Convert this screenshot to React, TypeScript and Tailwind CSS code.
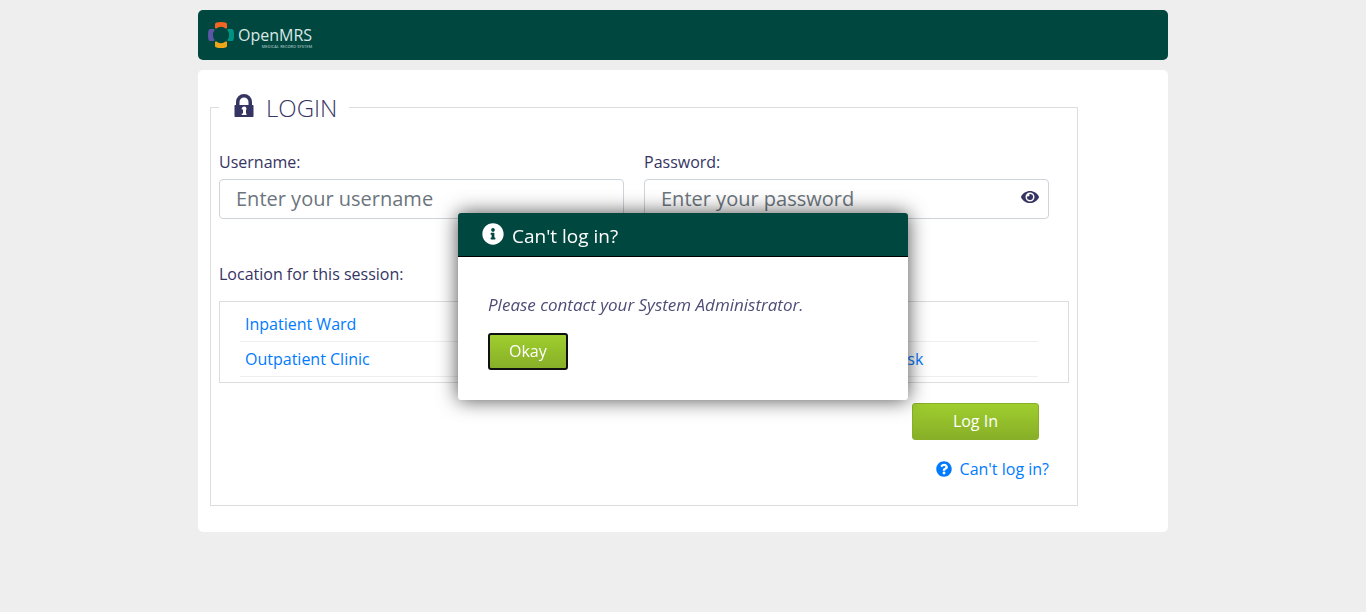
import React from "react";
import { FaEye, FaInfoCircle, FaQuestionCircle } from "react-icons/fa";

const locations = [
  "Inpatient Ward",
  "Isolation Ward",
  "Laboratory",
  "Outpatient Clinic",
  "Pharmacy",
  "Registration Desk",
];

function Logo() {
  return (
    <div className="flex items-center gap-1">
      <svg viewBox="0 0 26 26" className="size-[26px]" aria-hidden="true">
        <path d="M7 6V2Q7 0 13 0t6 2V6l-1 .7Q13 3 8 6.700Z" fill="#f26522" />
        <path d="M7 20v4Q7 26 13 26t6-2V20l-1-.7Q13 23 8 19.300Z" fill="#eea616" />
        <path d="M6 7H2Q0 7 0 13t2 6H6l.7-1Q3 13 6.700 8Z" fill="#5b57a6" />
        <path d="M20 7h4Q26 7 26 13t-2 6H20l-.7-1Q23 13 19.300 8Z" fill="#009384" />
      </svg>
      <div className="flex flex-col items-end pt-1 text-[#dce8e6]">
        <span className="text-base leading-5">OpenMRS</span>
        <span className="text-[4px] leading-1 font-semibold text-[#9dbdb8]">MEDICAL RECORD SYSTEM</span>
      </div>
    </div>
  );
}

function LockIcon() {
  return (
    <svg viewBox="0 0 20 24" className="h-6 w-5" fill="#363463" aria-hidden="true">
      <path
        fillRule="evenodd"
        d="M2 11V8a8 8 0 0 1 16 0v3h.8q.7 0 .7.800v10.400q0 .8-.7.800H1.200Q.5 23 .5 22.200V11.800Q.5 11 1.200 11ZM5.500 11h9V8a4.500 4.500 0 0 0-9 0ZM7.700 14.500v1H9V19.500H7.700V21h4.800v-1.500H12v-3l.5-2a2.300 2.300 0 0 0-2.400-2Q8.200 12.500 7.700 14.500Z"
      />
    </svg>
  );
}

function CantLogInDialog() {
  return (
    <div className="fixed inset-0 flex items-center justify-center p-4">
      <div
        role="dialog"
        aria-modal="true"
        aria-labelledby="dialog-title"
        className="w-full max-w-[450px] overflow-hidden rounded-[3px] bg-white shadow-[0_0_20px_#000000b3]"
      >
        <div className="flex h-11 items-center gap-2 border-b border-black bg-[#00473f] px-6 text-white">
          <FaInfoCircle className="size-[22px]" />
          <h3 id="dialog-title" className="pt-1 text-[19px]">Can't log in?</h3>
        </div>
        <div className="px-[30px] pt-9 pb-[30px]">
          <p className="mb-4 text-[17px] leading-6 text-[#4f4d78] italic">Please contact your System Administrator.</p>
          <button
            type="button"
            className="h-[37px] rounded-[3px] border-2 border-[#101010] bg-linear-to-b from-[#9fce2e] to-[#88af28] px-[19px] text-base text-white"
          >
            Okay
          </button>
        </div>
      </div>
    </div>
  );
}

export default function App() {
  const field = "h-10 w-full rounded border border-[#ced4da] bg-white px-4 pb-0.5 text-xl text-[#495057] placeholder:text-[#6c757d]";
  return (
    <div className="min-h-screen bg-[#eeeeee] px-4 py-2.5 font-['Open_Sans','Noto_Sans',sans-serif] font-normal text-[#363463]">
      <div className="mx-auto flex max-w-[970px] flex-col gap-2.5">
        <header className="flex h-[50px] items-center rounded-[5px] bg-[#00473f] px-2.5">
          <Logo />
        </header>

        <main className="rounded-[5px] bg-white pt-5 pr-[90px] pb-[26px] pl-3">
          <form>
            <fieldset className="border border-[#dddddd] px-2 pb-6">
              <legend className="flex h-[35px] items-center gap-3 pr-3 pl-[15px] text-2xl font-light">
                <span className="pb-1"><LockIcon /></span>
                LOGIN
              </legend>

              <div className="grid grid-cols-2 gap-5 pt-[25px] pr-5">
                <div>
                  <label htmlFor="username" className="mb-[5px] block text-base">Username:</label>
                  <input id="username" type="text" placeholder="Enter your username" className={field} />
                </div>
                <div>
                  <label htmlFor="password" className="mb-[5px] block text-base">Password:</label>
                  <div className="relative">
                    <input id="password" type="password" placeholder="Enter your password" className={field} />
                    <button type="button" aria-label="Show password" className="absolute top-[9px] right-2.5">
                      <FaEye className="size-[18px] text-[#363463]" />
                    </button>
                  </div>
                </div>
              </div>

              <p id="location-label" className="mt-[43px] mb-[15px] text-base">Location for this session:</p>
              <ul
                aria-labelledby="location-label"
                className="grid grid-cols-3 gap-x-6 border border-[#dddddd] pt-[5px] pr-[30px] pb-[5px] pl-5"
              >
                {locations.map((name) => (
                  <li key={name} className="border-b border-[#eeeeee] p-[5px]">
                    <a href="#location" className="block text-base text-[#007bff]">{name}</a>
                  </li>
                ))}
              </ul>

              <div className="mt-5 flex flex-col items-end gap-[17px]">
                <button
                  type="submit"
                  className="mr-[30px] h-[37px] rounded-[3px] border border-[#88af28] bg-linear-to-b from-[#9fce2e] to-[#88af28] px-10 pb-0.5 text-base text-white"
                >
                  Log In
                </button>
                <a href="#help" className="mr-5 flex items-center gap-2 text-base text-[#007bff]">
                  <FaQuestionCircle className="size-4" />
                  Can't log in?
                </a>
              </div>
            </fieldset>
          </form>
        </main>
      </div>
      <CantLogInDialog />
    </div>
  );
}
